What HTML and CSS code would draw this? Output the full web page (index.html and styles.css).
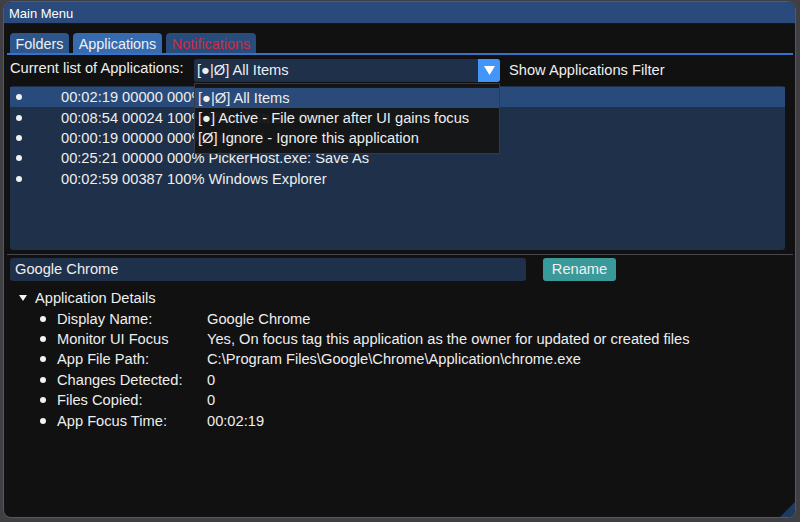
FILE: index.html
```html
<!DOCTYPE html>
<html>
<head>
<meta charset="utf-8">
<title>Main Menu</title>
<link rel="stylesheet" href="styles.css">
</head>
<body>
<div class="window">
  <div class="titlebar">Main Menu</div>
  <div class="content">
    <div class="tabbar">
      <div class="tab tab-folders">Folders</div>
      <div class="tab tab-active">Applications</div>
      <div class="tab tab-notify">Notifications</div>
    </div>
    <div class="tabline"></div>

    <div class="filter-row">
      <span class="filter-label">Current list of Applications:</span>
      <div class="combo">
        <span class="combo-value">[●|Ø] All Items</span>
        <span class="combo-arrow">
          <svg width="11" height="9" viewBox="0 0 11 9"><polygon points="0,0 11,0 5.5,9" fill="#ffffff"/></svg>
        </span>
        <div class="popup">
          <div class="popup-item selected">[●|Ø] All Items</div>
          <div class="popup-item">[●] Active - File owner after UI gains focus</div>
          <div class="popup-item">[Ø] Ignore - Ignore this application</div>
        </div>
      </div>
      <span class="filter-toggle">Show Applications Filter</span>
    </div>

    <div class="listbox">
      <div class="list-row selected"><span class="bullet"></span><span class="row-text">00:02:19 00000 000% Google Chrome</span></div>
      <div class="list-row"><span class="bullet"></span><span class="row-text">00:08:54 00024 100% Visual Studio Code</span></div>
      <div class="list-row"><span class="bullet"></span><span class="row-text">00:00:19 00000 000% Notepad</span></div>
      <div class="list-row"><span class="bullet"></span><span class="row-text">00:25:21 00000 000% PickerHost.exe: Save As</span></div>
      <div class="list-row"><span class="bullet"></span><span class="row-text">00:02:59 00387 100% Windows Explorer</span></div>
    </div>

    <div class="separator"></div>

    <div class="rename-row">
      <div class="text-input">Google Chrome</div>
      <button class="btn-rename">Rename</button>
    </div>

    <div class="tree">
      <div class="tree-header">
        <svg class="tree-arrow" width="8" height="6" viewBox="0 0 8 6"><polygon points="0,0 8,0 4,6" fill="#f2f2f2"/></svg>
        <span>Application Details</span>
      </div>
      <div class="detail-row"><span class="bullet"></span><span class="detail-label">Display Name:</span><span>Google Chrome</span></div>
      <div class="detail-row"><span class="bullet"></span><span class="detail-label">Monitor UI Focus</span><span>Yes, On focus tag this application as the owner for updated or created files</span></div>
      <div class="detail-row"><span class="bullet"></span><span class="detail-label">App File Path:</span><span>C:\Program Files\Google\Chrome\Application\chrome.exe</span></div>
      <div class="detail-row"><span class="bullet"></span><span class="detail-label">Changes Detected:</span><span>0</span></div>
      <div class="detail-row"><span class="bullet"></span><span class="detail-label">Files Copied:</span><span>0</span></div>
      <div class="detail-row"><span class="bullet"></span><span class="detail-label">App Focus Time:</span><span>00:02:19</span></div>
    </div>
  </div>
  <div class="resize-grip"></div>
</div>
</body>
</html>
```

FILE: styles.css
```css
html, body {
  margin: 0;
  padding: 0;
  background: #3f3f44;
}

body {
  font-family: "Liberation Sans", Arial, sans-serif;
  font-size: 14.67px;
  color: #eeeeee;
  width: 800px;
  height: 522px;
  overflow: hidden;
}

.window {
  position: relative;
  box-sizing: border-box;
  margin: 1px 0 0 3px;
  width: 793px;
  height: 517px;
  border: 1px solid #58585f;
  border-radius: 8px;
  background: #111111;
  overflow: hidden;
  display: flex;
  flex-direction: column;
}

.titlebar {
  flex: none;
  height: 22px;
  box-sizing: border-box;
  padding: 3px 0 0 5px;
  line-height: 18px;
  font-size: 13px;
  color: #ffffff;
  background: #294a7a;
  border-bottom: 1px solid #0d1a2c;
}

.content {
  padding: 9px 0 0 6px;
  display: flex;
  flex-direction: column;
}

/* tab strip */
.tabbar {
  display: flex;
  gap: 4px;
  height: 20px;
}

.tab {
  height: 20px;
  line-height: 22px;
  font-size: 14.4px;
  text-align: center;
  border-radius: 4px 4px 0 0;
  overflow: hidden;
  color: #f0f0f0;
}

.tab-folders {
  width: 59px;
  background: #2c568c;
}

.tab-active {
  width: 89px;
  background: #366bb0;
}

.tab-notify {
  width: 90px;
  background: #284c7c;
  color: #d42a3a;
}

.tabline {
  margin-left: -3px;
  width: 786px;
  height: 2px;
  background: #3772c8;
}

/* filter row with combo */
.filter-row {
  display: flex;
  margin-top: 4px;
  height: 23px;
}

.filter-label {
  width: 184px;
  flex: none;
  line-height: 19px;
  white-space: nowrap;
}

.combo {
  position: relative;
  width: 306px;
  flex: none;
  display: flex;
  background: #1e304a;
  border-radius: 3px;
}

.combo-value {
  flex: 1;
  padding-left: 3px;
  line-height: 23px;
}

.combo-arrow {
  width: 22px;
  height: 23px;
  background: #4296fa;
  border-radius: 0 3px 3px 0;
  display: flex;
  align-items: center;
  justify-content: center;
}

.combo-arrow svg {
  display: block;
  margin-left: 1px;
}

.popup {
  position: absolute;
  top: 24px;
  left: 0;
  z-index: 2;
  box-sizing: border-box;
  width: 306px;
  height: 71px;
  padding-top: 4px;
  background: rgba(20, 20, 20, 0.94);
  border: 1px solid #3a3a3e;
}

.popup-item {
  height: 20px;
  line-height: 20px;
  padding-left: 3px;
  white-space: nowrap;
}

.popup-item.selected {
  background: #2a4a79;
}

.filter-toggle {
  margin-left: 9px;
  line-height: 23px;
}

/* application list */
.listbox {
  margin-top: 4px;
  width: 775px;
  height: 164px;
  box-sizing: border-box;
  padding-top: 1px;
  background: #1e304a;
  border-radius: 3px;
}

.list-row {
  display: flex;
  align-items: center;
  height: 20.4px;
  white-space: nowrap;
}

.list-row.selected {
  background: #294b7b;
}

.bullet {
  flex: none;
  width: 6px;
  height: 6px;
  border-radius: 50%;
  background: #f2f2f2;
}

.list-row .bullet {
  margin-left: 6px;
}

.row-text {
  margin-left: 39px;
}

.separator {
  margin: 4px 0 0 -3px;
  width: 786px;
  height: 1px;
  background: #46464c;
}

/* rename */
.rename-row {
  display: flex;
  margin-top: 3px;
  height: 23px;
}

.text-input {
  width: 516px;
  box-sizing: border-box;
  padding-left: 5px;
  line-height: 23px;
  background: #1e304a;
  border-radius: 3px;
}

.btn-rename {
  margin-left: 17px;
  width: 73px;
  height: 23px;
  padding: 0;
  border: none;
  border-radius: 3px;
  background: #3a9a9a;
  color: #f0f0f0;
  font-family: inherit;
  font-size: 14.67px;
  line-height: 23px;
}

/* details tree */
.tree {
  margin-top: 7px;
}

.tree-header {
  display: flex;
  align-items: center;
  height: 20.4px;
}

.tree-arrow {
  margin-left: 9px;
  margin-right: 8px;
  display: block;
}

.detail-row {
  display: flex;
  align-items: center;
  height: 20.4px;
  white-space: nowrap;
}

.detail-row .bullet {
  margin-left: 30px;
}

.detail-label {
  width: 150px;
  margin-left: 11px;
  flex: none;
}

.resize-grip {
  position: absolute;
  right: 0;
  bottom: 0;
  width: 15px;
  height: 15px;
  background: #1f3a60;
  clip-path: polygon(100% 0, 100% 100%, 0 100%);
}
```
